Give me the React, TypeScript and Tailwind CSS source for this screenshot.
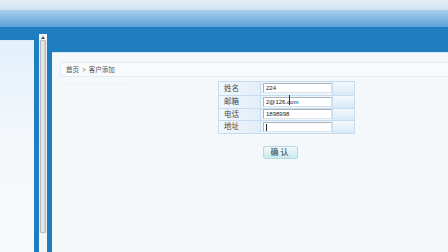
import React from "react";

const rows = [
  { label: "姓名", value: "224" },
  { label: "邮箱", value: "2@126.com", cursor: true },
  { label: "电话", value: "1898998" },
  { label: "地址", value: "", caret: true },
];

function Scrollbar() {
  return (
    <div className="mt-[7px] flex w-[8px] flex-col bg-[#e9edf0]">
      <div className="flex h-[6px] items-center justify-center bg-[#f4f6f8]">
        <div className="h-0 w-0 border-x-[2px] border-b-[3px] border-x-transparent border-b-[#555]" />
      </div>
      <div className="mx-[1px] h-[193px] rounded-[1px] border border-[#b8bcc0] bg-gradient-to-r from-[#d7d9dc] via-[#eceef0] to-[#c9ccd0]" />
      <div className="flex-1 bg-[#f3f5f7]" />
    </div>
  );
}

export default function App() {
  return (
    <div
      className="h-[252px] w-[448px] overflow-hidden"
      style={{ fontFamily: '"Liberation Sans", "Noto Sans CJK SC", sans-serif' }}
    >
      {/* header bands */}
      <div className="h-[10px] bg-gradient-to-b from-[#e6eff5] to-[#cfe3f1]" />
      <div className="h-[17px] bg-gradient-to-b from-[#a6cdec] to-[#5aa2d8]" />

      <div className="flex h-[225px] bg-[#1e7ec0]">
        {/* left menu panel */}
        <div className="mt-[13px] w-[34px] border-t border-[#d9ecf8] bg-gradient-to-b from-[#e3f1fb] via-[#f5f8fb] to-[#f7f9fb]" />
        <div className="w-[5px]" />
        <Scrollbar />
        <div className="w-[5px]" />

        {/* main panel */}
        <div className="mt-[25px] flex-1 border-t border-[#cfe6f6] bg-[#f5f8fa] pl-[8px] pt-[9px]">
          <div className="flex h-[15px] items-center border border-r-0 border-[#e2ecf4] bg-[#f8fafc] pl-[5px] text-[6.5px] text-[#555]">
            <span>首页</span>
            <span className="mx-[3px] text-[#777]">&gt;</span>
            <span>客户添加</span>
          </div>
          <div className="mt-[6px] flex gap-[8px]">
            <div className="h-0 w-[66px] border-t border-dashed border-[#eaedf0]" />
            <div className="h-0 w-[40px] border-t border-dashed border-[#eff1f3]" />
          </div>

          <div className="ml-[158px] mt-[-3px] w-[137px] border border-[#c6dcee] bg-[#f7fbfe]">
            {rows.map((r, i) => (
              <div
                key={r.label}
                className={`flex h-[12.75px] ${i > 0 ? "border-t border-[#c6dcee]" : ""}`}
              >
                <div className="flex w-[41px] items-center bg-gradient-to-r from-[#f1f7fc] to-[#e2eef8] pl-[5px] text-[7.5px] leading-none text-[#4a4a4a]">
                  {r.label}
                </div>
                <div className="flex w-[72px] items-center border-l border-[#c6dcee] bg-[#eef5fb] pl-[2px]">
                  <div className="relative flex h-[10px] w-[69px] items-center border border-[#aab3bb] border-b-[#dde3e8] border-r-[#dde3e8] bg-white pl-[2px] text-[6px] leading-none text-[#222]">
                    {r.value}
                    {r.caret && <div className="h-[7px] w-[1px] bg-[#222]" />}
                    {r.cursor && (
                      <div className="absolute left-[25px] top-[-3px] h-[10px] w-[1px] bg-[#333]" />
                    )}
                  </div>
                </div>
                <div className="flex-1 border-l border-[#c6dcee] bg-gradient-to-b from-[#f4f9fd] to-[#d9e9f6]" />
              </div>
            ))}
          </div>

          <div className="ml-[203px] mt-[12px] flex h-[13px] w-[35px] items-center justify-center rounded-[2px] border border-[#b4dbe2] bg-gradient-to-b from-[#f0fafb] to-[#c9eaef] text-[8px] font-bold tracking-[2px] text-[#5b6f76]">
            确认
          </div>
        </div>
      </div>
    </div>
  );
}
